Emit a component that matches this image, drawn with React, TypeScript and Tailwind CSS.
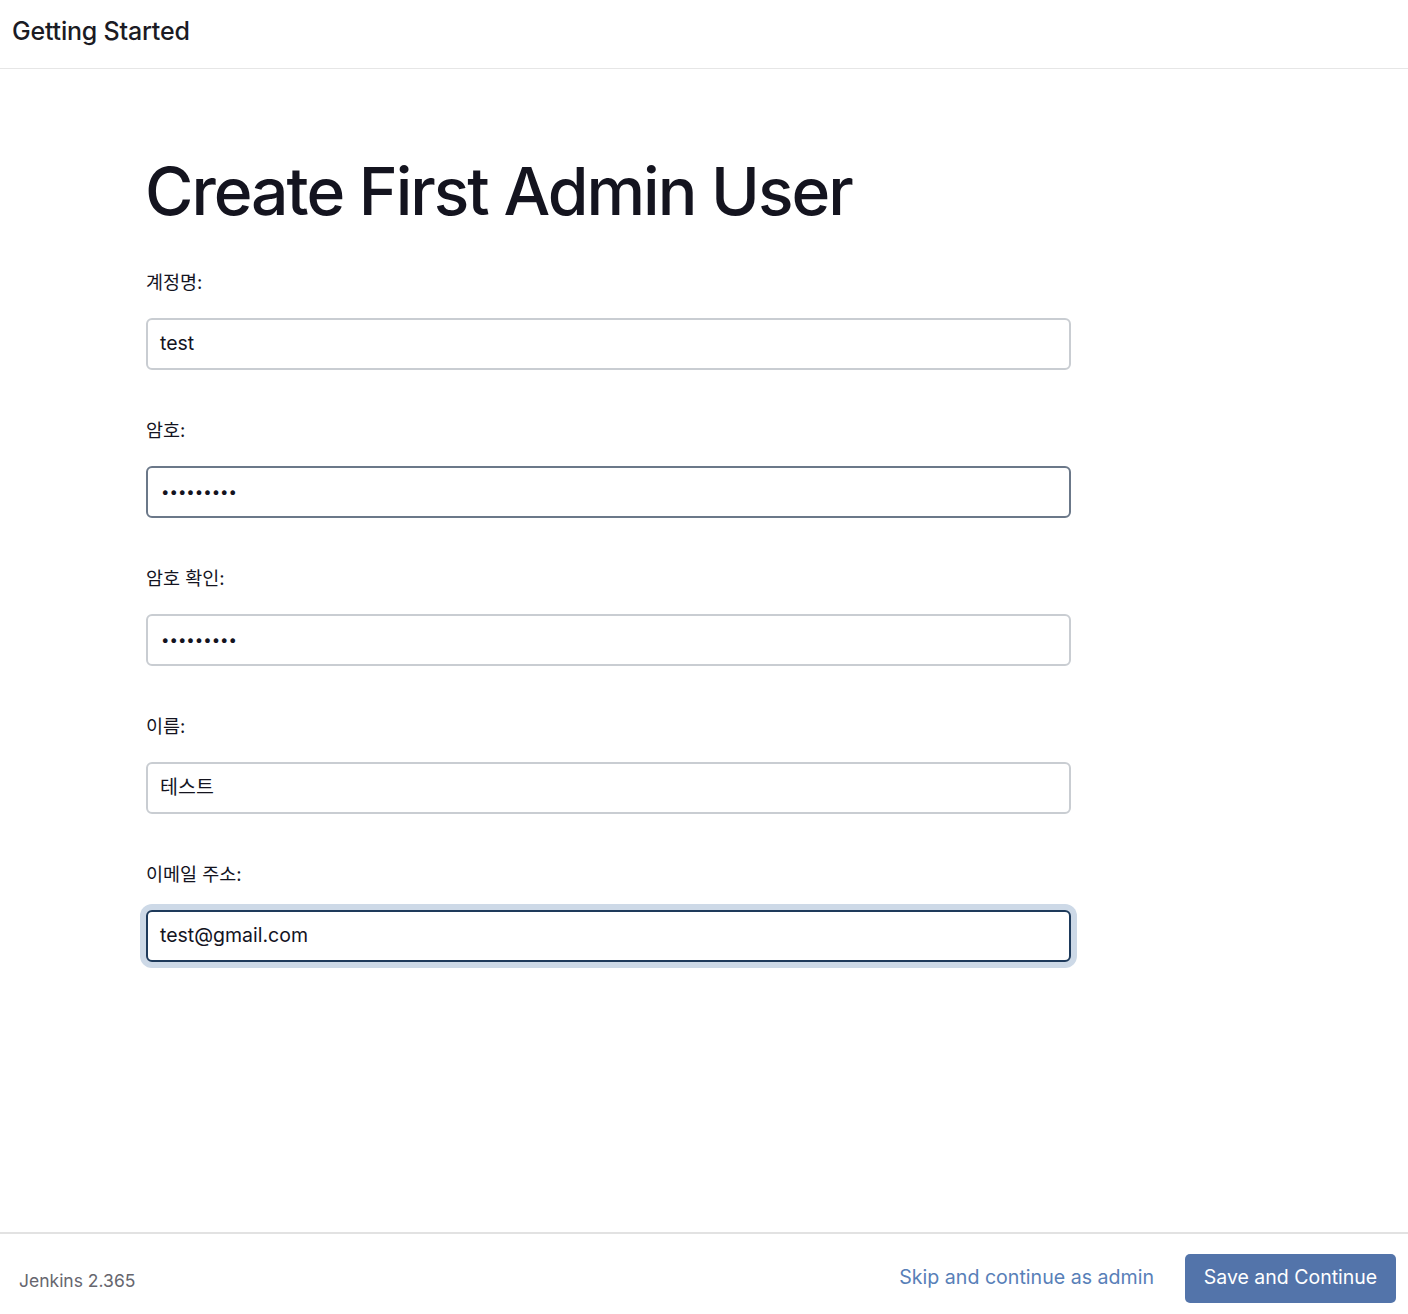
import React from "react";

const font = { fontFamily: 'Inter, "Noto Sans CJK KR", sans-serif' };

function Field({ label, value, variant }: { label: string; value: string; variant?: "hover" | "focus" }) {
  const isPw = value.startsWith("•");
  const base =
    "w-[925px] h-[52px] rounded-[6px] border-2 bg-white px-[12px] flex items-center text-[19.5px] text-[#14141f]";
  const cls =
    variant === "hover"
      ? "border-[#6b7889]"
      : variant === "focus"
      ? "border-[#1e3a5b] shadow-[0_0_0_6px_#cdd9e7]"
      : "border-[#c9cdd2]";
  return (
    <div className="flex flex-col">
      <div className="text-[18.5px] text-[#14141f] h-[26px] leading-[26px]">{label}</div>
      <div className="h-[23px]" />
      <div className={`${base} ${cls}`}>
        <span className={isPw ? "tracking-[0px] text-[15px] ml-[1px]" : ""}>{value}</span>
      </div>
    </div>
  );
}

export default function App() {
  return (
    <div className="w-[1408px] h-[1314px] bg-white flex flex-col" style={font}>
      <div className="h-[69px] border-b border-[#e6e6e6] flex items-center pl-[12px] pb-[5px]">
        <span className="text-[25px] text-[#1b1b24] font-medium tracking-[-0.2px]">Getting Started</span>
      </div>
      <div className="flex-1 pl-[146px] pt-[84px]">
        <h1 className="text-[66px] leading-[76px] font-medium text-[#14141f] tracking-[-2px] ml-[-1px]">
          Create First Admin User
        </h1>
        <div className="mt-[40px] flex flex-col gap-[47px]">
          <Field label="계정명:" value="test" />
          <Field label="암호:" value="•••••••••" variant="hover" />
          <Field label="암호 확인:" value="•••••••••" />
          <Field label="이름:" value="테스트" />
          <Field label="이메일 주소:" value="test@gmail.com" variant="focus" />
        </div>
      </div>
      <div className="h-[82px] border-t-2 border-[#e2e2e2] flex items-center justify-between pl-[19px] pr-[12px]">
        <span className="text-[17.5px] text-[#66666e] mt-[15px]">Jenkins 2.365</span>
        <div className="flex items-center gap-[31px] mt-[8px]">
          <span className="text-[19.6px] text-[#5880b8]">Skip and continue as admin</span>
          <button className="w-[211px] h-[49px] rounded-[5px] bg-[#5374aa] text-white text-[19.5px] flex items-center justify-center">
            Save and Continue
          </button>
        </div>
      </div>
    </div>
  );
}
